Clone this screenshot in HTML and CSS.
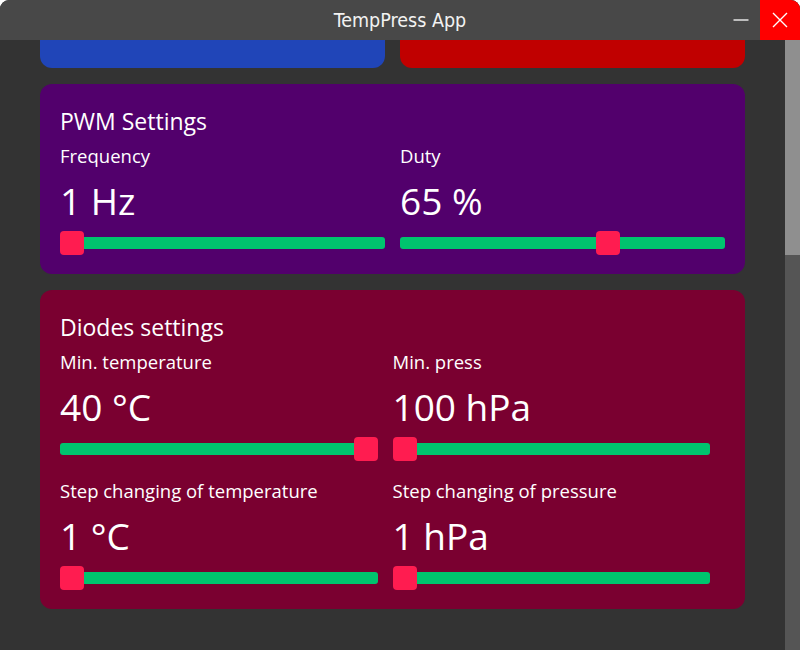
FILE: index.html
```html
<!DOCTYPE html>
<html>
<head>
<meta charset="utf-8">
<link rel="stylesheet" href="styles.css">
</head>
<body>
<div class="window">
  <header class="titlebar">
    <span class="title">TempPress App</span>
    <div class="controls">
      <button class="btn-min" aria-label="minimize">
        <svg width="16" height="4" viewBox="0 0 16 4"><line x1="0.5" y1="2" x2="15.5" y2="2" stroke="#dcdcdc" stroke-width="1.6"/></svg>
      </button>
      <button class="btn-close" aria-label="close">
        <svg width="16" height="16" viewBox="0 0 16 16"><path d="M1 1 L15 15 M15 1 L1 15" stroke="#ffffff" stroke-width="1.4" fill="none"/></svg>
      </button>
    </div>
  </header>
  <div class="body">
    <main class="content">
      <div class="top-row">
        <div class="stub stub-blue"></div>
        <div class="stub stub-red"></div>
      </div>

      <section class="card card-pwm">
        <h2 class="card-title">PWM Settings</h2>
        <div class="grid">
          <div class="field">
            <div class="label">Frequency</div>
            <div class="value">1 Hz</div>
            <div class="slider"><div class="track"></div><div class="thumb" style="--v:0"></div></div>
          </div>
          <div class="field">
            <div class="label">Duty</div>
            <div class="value">65 %</div>
            <div class="slider"><div class="track"></div><div class="thumb" style="--v:0.65"></div></div>
          </div>
        </div>
      </section>

      <section class="card card-diodes">
        <h2 class="card-title">Diodes settings</h2>
        <div class="grid grid-rows">
          <div class="field">
            <div class="label">Min. temperature</div>
            <div class="value">40 °C</div>
            <div class="slider"><div class="track"></div><div class="thumb" style="--v:1"></div></div>
          </div>
          <div class="field">
            <div class="label">Min. press</div>
            <div class="value">100 hPa</div>
            <div class="slider"><div class="track"></div><div class="thumb" style="--v:0"></div></div>
          </div>
          <div class="field">
            <div class="label">Step changing of temperature</div>
            <div class="value">1 °C</div>
            <div class="slider"><div class="track"></div><div class="thumb" style="--v:0"></div></div>
          </div>
          <div class="field">
            <div class="label">Step changing of pressure</div>
            <div class="value">1 hPa</div>
            <div class="slider"><div class="track"></div><div class="thumb" style="--v:0"></div></div>
          </div>
        </div>
      </section>
    </main>
    <div class="scrollbar"><div class="scroll-thumb"></div></div>
  </div>
</div>
</body>
</html>
```
FILE: styles.css
```css
* { box-sizing: border-box; }
html, body { margin: 0; padding: 0; background: #ffffff; }
body { width: 800px; height: 650px; overflow: hidden; font-family: "Open Sans", "Noto Sans", sans-serif; color: #ffffff; }

.window { width: 800px; height: 650px; display: flex; flex-direction: column; background: #333333; border-radius: 9px 9px 0 0; overflow: hidden; }

.titlebar { height: 40px; flex: none; background: #484848; display: grid; grid-template-columns: 1fr auto 1fr; align-items: center; }
.title { grid-column: 2; font-family: "DejaVu Sans Condensed", "DejaVu Sans", sans-serif; font-size: 19.5px; color: #f2f2f2; }
.controls { grid-column: 3; justify-self: end; display: flex; height: 40px; align-items: stretch; }
.controls button { border: 0; padding: 0; margin: 0; width: 40px; display: flex; align-items: center; justify-content: center; background: transparent; }
.btn-min { width: 44px !important; }
.btn-min svg { margin-left: 6px; }
.btn-close { background: #ff0000 !important; }

.body { flex: 1; display: flex; min-height: 0; }
.content { flex: 1; padding: 0 40px; display: flex; flex-direction: column; gap: 16px; }
.scrollbar { width: 15px; flex: none; background: #555555; }
.scroll-thumb { height: 215px; background: #8f8f8f; }

.top-row { display: grid; grid-template-columns: 1fr 1fr; gap: 15px; }
.stub { height: 28px; border-radius: 0 0 12px 12px; }
.stub-blue { background: #2045b8; }
.stub-red { background: #c00000; }

.card { border-radius: 12px; padding: 20px 20px 19px 20px; }
.card-pwm { background: #52006c; }
.card-diodes { background: #7a0030; padding-right: 35px; }

.card-title { margin: 0; height: 36px; line-height: 34px; font-size: 23px; font-weight: 400; }

.grid { display: grid; grid-template-columns: 1fr 1fr; column-gap: 15px; }
.grid-rows { row-gap: 14px; }

.label { height: 34px; line-height: 32px; font-size: 18.5px; }
.value { height: 57px; line-height: 53px; font-size: 37px; }

.slider { position: relative; height: 24px; display: flex; align-items: center; }
.track { width: 100%; height: 12px; background: #00c46e; border-radius: 3px; }
.thumb { position: absolute; top: 0; width: 24px; height: 24px; border-radius: 4px; background: #ff1c50; left: calc(var(--v) * (100% - 24px)); }
```
